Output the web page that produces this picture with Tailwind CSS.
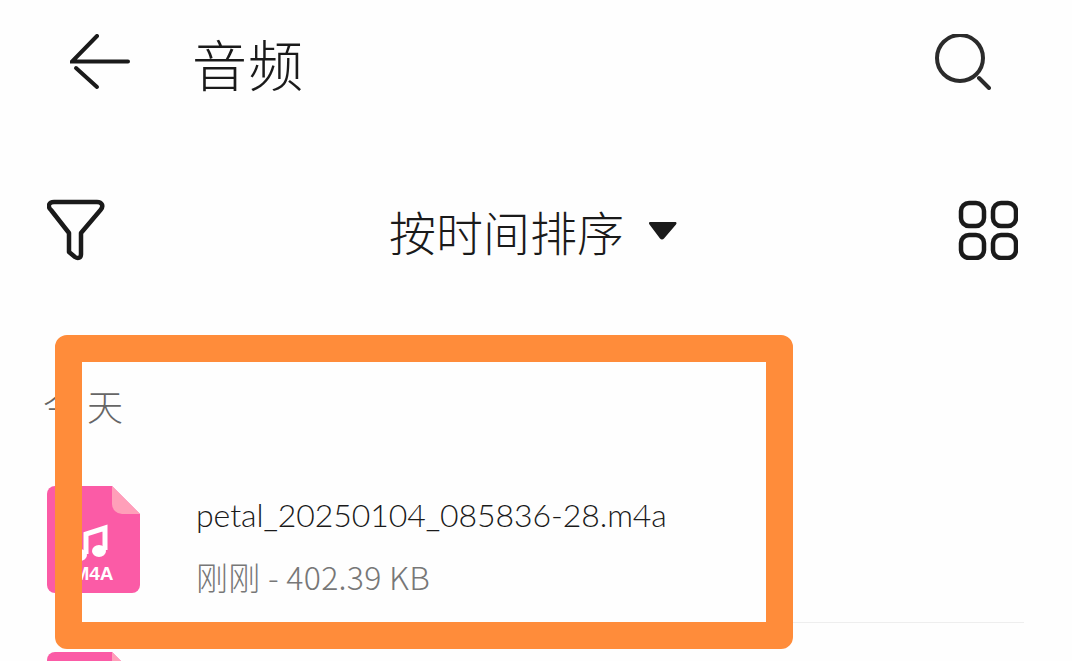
<!DOCTYPE html>
<html lang="zh-CN">
<head>
    <meta charset="UTF-8">
    <script src="https://cdn.jsdelivr.net/npm/@tailwindcss/browser@4"></script>
    <title>音频</title>
</head>
<body>
    <main class="relative w-[1072px] h-[661px] overflow-hidden bg-[#fefefe] font-['Noto_Sans_CJK_SC',sans-serif] text-[#1a1a1a]">
        <!-- top bar -->
        <header class="h-[124px] flex items-center pl-[70px] pr-[81px]">
            <svg class="w-[60px] h-[56px] shrink-0" viewBox="70 33 60 56" fill="none" stroke="#1a1a1a" stroke-width="4" stroke-linecap="round">
                <path d="M97 35 72 60.500H128"/>
                <path d="M76 67 97 86"/>
            </svg>
            <h1 class="ml-[62px] text-[55px] leading-none font-light tracking-[1px]">音频</h1>
            <svg class="ml-auto w-[56px] h-[56px] shrink-0" viewBox="934 32 56 56" fill="none" stroke="#2b2b2b" stroke-width="4" stroke-linecap="round">
                <circle cx="959" cy="56" r="23"/>
                <path d="M978 76 988 86"/>
            </svg>
        </header>

        <!-- filter row -->
        <div class="mt-[74px] h-[64px] flex items-center pl-[47px] pr-[54px]">
            <svg class="w-[58px] h-[62px] shrink-0" viewBox="47 198 58 62" fill="none" stroke="#1a1a1a" stroke-width="4.500" stroke-linejoin="round">
                <path d="M54 201H97C102 201 104 205 100.500 209L81 232V253C81 257 78 258 75 256L69 251V232L51 209C47 205 49 201 54 201Z"/>
            </svg>
            <div class="flex-1 flex items-center justify-center pl-[3px]">
                <span class="text-[47px] leading-none font-light">按时间排序</span>
                <svg class="ml-[25px] w-[28px] h-[19px]" viewBox="649 223 28 19" fill="#1a1a1a">
                    <path d="M650 224H675C676.500 224 677 225 676 226.500L664 240.500C663 241.800 661 241.800 660 240.500L649.500 226.500C648.500 225 649 224 650 224Z"/>
                </svg>
            </div>
            <svg class="w-[60px] h-[60px] shrink-0" viewBox="958 199 60 60" fill="none" stroke="#1a1a1a" stroke-width="4.500">
                <rect x="961" y="202" width="23" height="23" rx="8"/>
                <rect x="993" y="202" width="23" height="23" rx="8"/>
                <rect x="961" y="234" width="23" height="23" rx="8"/>
                <rect x="993" y="234" width="23" height="23" rx="8"/>
            </svg>
        </div>

        <!-- today -->
        <div class="mt-[124px] pl-[43px] h-[38px] flex items-center text-[36px] leading-none font-light tracking-[8px] text-[#666666]">今天</div>

        <!-- file list -->
        <ul class="mt-[32px]">
            <li class="h-[167px] flex items-center pl-[47px] pr-[48px]">
                <svg class="w-[93px] h-[107px] shrink-0" viewBox="0 0 93 107">
                    <path d="M8 0H65L93 28V99A8 8 0 0 1 85 107H8A8 8 0 0 1 0 99V8A8 8 0 0 1 8 0Z" fill="#fb5ba6"/>
                    <path d="M65 0 93 28H75A10 10 0 0 1 65 18Z" fill="#ff9fb9"/>
                    <path d="M39 68V48L58 42V64" fill="none" stroke="#ffffff" stroke-width="5"/>
                    <ellipse cx="33" cy="69" rx="7" ry="6" fill="#ffffff"/>
                    <ellipse cx="52" cy="65" rx="7" ry="6" fill="#ffffff"/>
                    <text x="46.500" y="94" text-anchor="middle" fill="#ffffff" font-size="19" font-weight="700" font-family="Liberation Sans, sans-serif">M4A</text>
                </svg>
                <div class="ml-[56px] flex-1 h-full border-b border-[#eeeeee] flex flex-col pt-[37px]">
                    <p class="text-[32px] leading-[44px] font-['Lato',sans-serif] font-light tracking-[-0.07px] whitespace-nowrap">petal_20250104_085836-28.m4a</p>
                    <p class="mt-[21px] text-[32px] leading-[36px] font-light tracking-[0.3px] text-[#777777] whitespace-nowrap">刚刚 - 402.39 KB</p>
                </div>
            </li>
            <li class="h-[166px] flex items-start pt-[29px] pl-[47px]">
                <svg class="w-[93px] h-[107px] shrink-0" viewBox="0 0 93 107">
                    <path d="M8 0H65L93 28V99A8 8 0 0 1 85 107H8A8 8 0 0 1 0 99V8A8 8 0 0 1 8 0Z" fill="#fb5ba6"/>
                    <path d="M65 0 93 28H75A10 10 0 0 1 65 18Z" fill="#ff9fb9"/>
                </svg>
            </li>
        </ul>

        <!-- orange highlight drawn over the screenshot -->
        <div class="absolute left-[55px] top-[335px] w-[738px] h-[314px] border-[27px] border-[#ff8c3a] rounded-[12px]"></div>
    </main>
</body>
</html>
